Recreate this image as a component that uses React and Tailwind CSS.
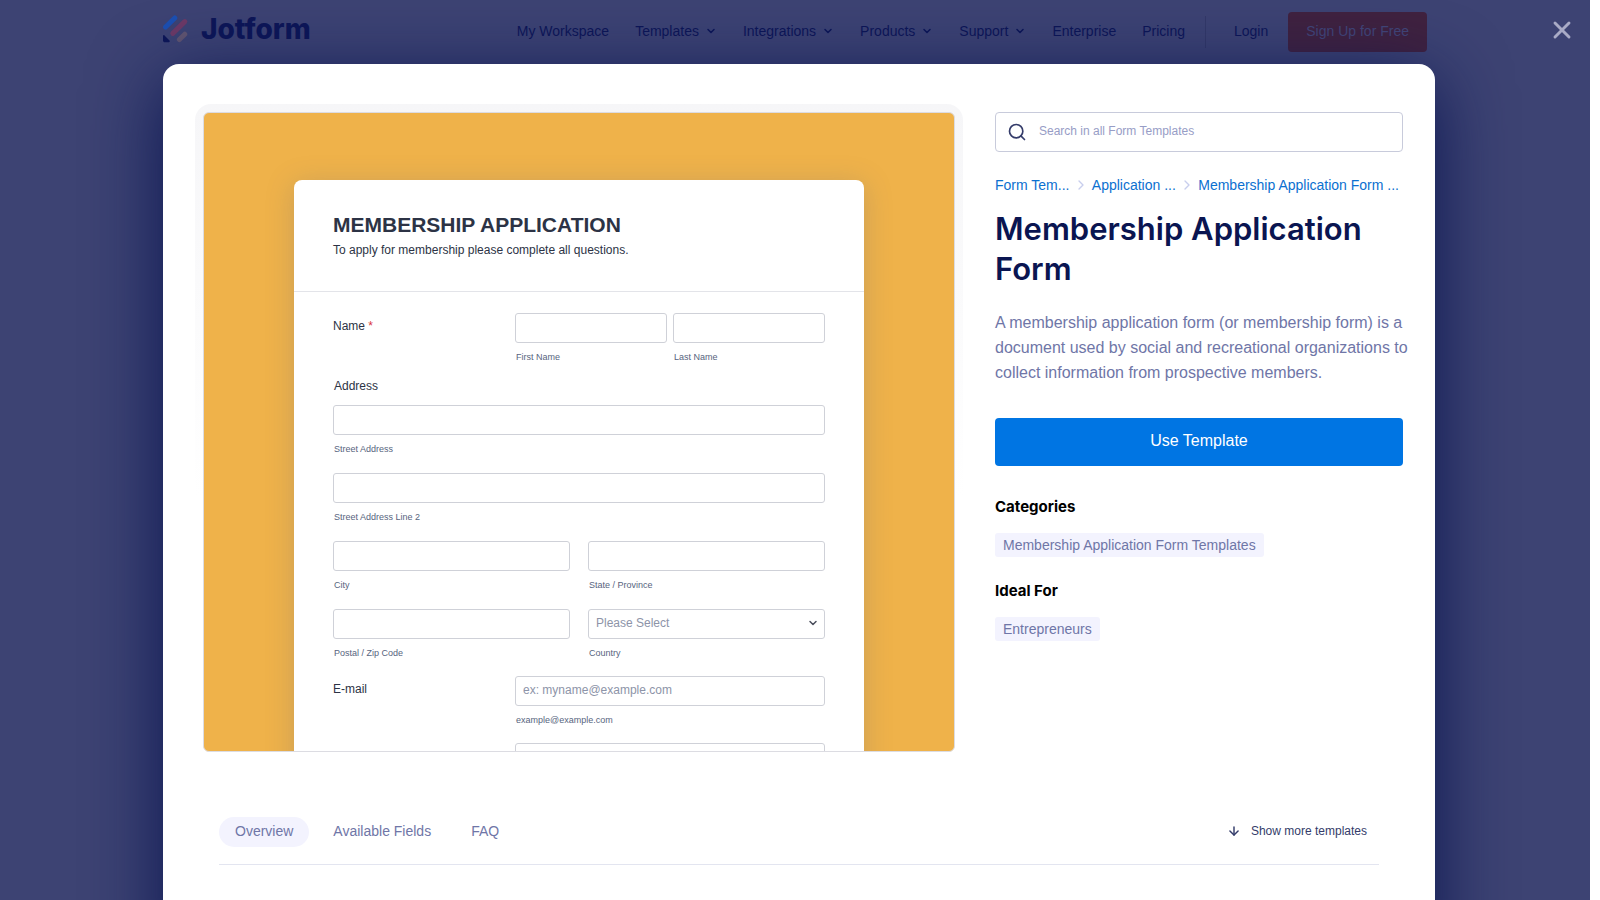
import React, { useState } from "react";
import { ArrowDown, ChevronDown, ChevronRight, Search, X } from "lucide-react";

const NAV_ITEMS = [
  { label: "My Workspace" },
  { label: "Templates", menu: true },
  { label: "Integrations", menu: true },
  { label: "Products", menu: true },
  { label: "Support", menu: true },
  { label: "Enterprise" },
  { label: "Pricing" }
];

const CRUMBS = ["Form Tem...", "Application ...", "Membership Application Form ..."];

const TABS = ["Overview", "Available Fields", "FAQ"];

function JotformLogo() {
  return (
    <a href="#" className="flex items-center gap-3 pb-1.5 text-[#0d1657]">
      <svg width="26" height="28" viewBox="0 0 26 28" fill="none" aria-hidden="true">
        <path d="M2.6 12 11.800 3" stroke="#1c50b2" strokeWidth="5" strokeLinecap="round" />
        <path d="M9.800 18.400 21.800 6.600" stroke="#6d3a66" strokeWidth="5" strokeLinecap="round" />
        <path d="M16.400 24.600 21.800 19.200" stroke="#625670" strokeWidth="5" strokeLinecap="round" />
        <path d="M0 21c0-.8.9-1.200 1.500-.6l5 5.200c.6.6.2 1.600-.7 1.600H1.900C.8 27.200 0 26.400 0 25.400z" fill="#0d1657" />
      </svg>
      <span className="font-['Inter',sans-serif] text-[28px] leading-8 font-extrabold">Jotform</span>
    </a>
  );
}

function SiteHeader() {
  return (
    <header className="mx-auto flex h-16 w-full max-w-[1272px] items-center justify-between pr-2 text-sm text-[#0d1657]">
      <JotformLogo />
      <nav className="flex items-center">
        <ul className="flex items-center gap-[26px] pb-0.5">
          {NAV_ITEMS.map((item) => (
            <li key={item.label}>
              <a href="#" className="flex items-center gap-1.5">
                {item.label}
                {item.menu && <ChevronDown size={12} strokeWidth={3} />}
              </a>
            </li>
          ))}
        </ul>
        <span className="ml-5 h-8 w-px bg-[#333968]" />
        <a href="#" className="ml-7 pb-0.5">Login</a>
        <a
          href="#"
          className="ml-5 flex h-10 items-center rounded bg-[#40223f] px-[18px] pb-0.5 text-[#434678]"
        >
          Sign Up for Free
        </a>
      </nav>
    </header>
  );
}

function Field({ id, label, children, ...inputProps }) {
  return (
    <div className="min-w-0 flex-1">
      {children ?? (
        <input
          id={id}
          className="block h-[30px] w-full rounded-[3px] border border-[#cfd1d8] px-[7px] pb-0.5 text-xs text-[#2c3345] placeholder:text-[#8d94a8]"
          {...inputProps}
        />
      )}
      {label && (
        <label htmlFor={id} className="mt-[7px] block pl-px text-[9px] leading-[14px] text-[#57647e]">
          {label}
        </label>
      )}
    </div>
  );
}

function FormRow({ label, required, children }) {
  return (
    <div className="flex">
      <div className="w-[37%] pt-[5px] leading-4">
        {label}
        {required && <span className="text-[#d9363e]"> *</span>}
      </div>
      <div className="flex flex-1 gap-1.5">{children}</div>
    </div>
  );
}

function TemplatePreview() {
  return (
    <div className="min-w-0 flex-1 rounded-2xl bg-linear-to-b from-[#f6f6f8] to-white to-60% p-2">
      <div className="h-[640px] overflow-hidden rounded-md border border-[#dcdce2] bg-[#efb24a]">
        <form className="mx-auto mt-[67px] w-[76%] rounded-t-lg bg-white pb-10 font-['Liberation_Sans',sans-serif] text-xs text-[#2c3345] shadow-[0_4px_28px_rgba(87,100,126,0.25)]">
          <div className="border-b border-[#e3e4e9] px-[39px] pt-[30px] pb-[31px]">
            <h2 className="text-[21px] leading-[30px] font-bold">MEMBERSHIP APPLICATION</h2>
            <p className="leading-5">To apply for membership please complete all questions.</p>
          </div>

          <div className="px-[39px] pt-[21px]">
            <FormRow label="Name" required>
              <Field id="first-name" label="First Name" />
              <Field id="last-name" label="Last Name" />
            </FormRow>

            <fieldset className="mt-3.5">
              <legend className="pb-[11px] pl-px leading-4">Address</legend>
              <div className="flex flex-col gap-[17px]">
                <Field id="street" label="Street Address" />
                <Field id="street-2" label="Street Address Line 2" />
                <div className="flex gap-[18px]">
                  <Field id="city" label="City" />
                  <Field id="state" label="State / Province" />
                </div>
                <div className="flex gap-[18px]">
                  <Field id="postal" label="Postal / Zip Code" />
                  <Field id="country" label="Country">
                    <div className="relative">
                      <select
                        id="country"
                        className="block h-[30px] w-full appearance-none rounded-[3px] border border-[#cfd1d8] bg-white px-[7px] pb-0.5 text-xs text-[#8d94a8]"
                      >
                        <option>Please Select</option>
                      </select>
                      <ChevronDown
                        size={12}
                        strokeWidth={3}
                        className="pointer-events-none absolute top-2 right-1.5 text-[#4a4e5c]"
                      />
                    </div>
                  </Field>
                </div>
              </div>
            </fieldset>

            <div className="mt-4 flex flex-col gap-4">
              <FormRow label="E-mail">
                <Field id="email" type="email" label="example@example.com" placeholder="ex: myname@example.com" />
              </FormRow>
              <FormRow>
                <Field id="phone" aria-label="Phone" />
              </FormRow>
            </div>
          </div>
        </form>
      </div>
    </div>
  );
}

function TagSection({ title, tag, className }) {
  return (
    <section className={className}>
      <h2 className="font-['Inter',sans-serif] text-[15px] leading-6 font-bold text-black">{title}</h2>
      <a href="#" className="mt-3.5 inline-block rounded-[3px] bg-[#f3f3fe] px-2 text-sm leading-6 text-[#6f76a7]">
        {tag}
      </a>
    </section>
  );
}

function TemplateInfo() {
  return (
    <aside className="w-[408px] shrink-0 pt-2">
      <div className="flex h-10 items-center gap-3 rounded border border-[#c8cbdb] px-[11px]">
        <Search size={20} className="text-[#343c6a]" />
        <input
          type="search"
          aria-label="Search in all Form Templates"
          placeholder="Search in all Form Templates"
          className="min-w-0 flex-1 pb-0.5 text-xs outline-none placeholder:text-[#979dc6]"
        />
      </div>

      <nav className="mt-[23px] flex items-center justify-between pr-1 text-sm leading-5 text-[#0b70d0]">
        {CRUMBS.map((crumb, i) => (
          <React.Fragment key={crumb}>
            {i > 0 && <ChevronRight size={16} className="text-[#c8ceed]" />}
            <a href="#">{crumb}</a>
          </React.Fragment>
        ))}
      </nav>

      <h1 className="mt-3.5 font-['Inter',sans-serif] text-[31px] leading-10 font-semibold text-[#0a1551]">
        Membership Application Form
      </h1>
      <p className="-mr-2 mt-[21px] text-base leading-[25px] text-[#6f76a7]">
        A membership application form (or membership form) is a document used by social and recreational organizations
        to collect information from prospective members.
      </p>

      <button type="button" className="mt-[33px] h-12 w-full rounded bg-[#0075e3] pb-0.5 text-base text-white">
        Use Template
      </button>

      <TagSection className="mt-[29px]" title="Categories" tag="Membership Application Form Templates" />
      <TagSection className="mt-[22px]" title="Ideal For" tag="Entrepreneurs" />
    </aside>
  );
}

function TemplateTabs() {
  const [active, setActive] = useState("Overview");

  return (
    <div className="mx-6 mt-[57px] flex items-center justify-between border-b border-[#e3e5f0] pb-[17px]">
      <div role="tablist" className="flex gap-2">
        {TABS.map((tab) => (
          <button
            key={tab}
            type="button"
            role="tab"
            aria-selected={active === tab}
            onClick={() => setActive(tab)}
            className={`h-[30px] rounded-full px-4 pb-0.5 text-sm text-[#6f76a7] ${active === tab ? "bg-[#f3f3fe]" : ""}`}
          >
            {tab}
          </button>
        ))}
      </div>
      <button type="button" className="flex items-center gap-2.5 px-3 pb-0.5 text-xs text-[#343c6a]">
        <ArrowDown size={14} strokeWidth={2.5} />
        Show more templates
      </button>
    </div>
  );
}

export default function App() {
  return (
    <div className="h-screen overflow-hidden bg-white pr-2.5 font-['Liberation_Sans',sans-serif]">
      <div className="relative h-full overflow-hidden bg-[#3d4373] pl-2">
        <SiteHeader />
        <main className="relative mx-auto min-h-full w-full max-w-[1272px] rounded-t-2xl bg-white px-8 pt-10 shadow-[0_16px_72px_#0a1551]">
          <div className="flex gap-8">
            <TemplatePreview />
            <TemplateInfo />
          </div>
          <TemplateTabs />
        </main>
        <button type="button" aria-label="Close" className="absolute top-4 right-3.5 text-[#a9abc6]">
          <X size={28} strokeWidth={2.5} />
        </button>
      </div>
    </div>
  );
}
